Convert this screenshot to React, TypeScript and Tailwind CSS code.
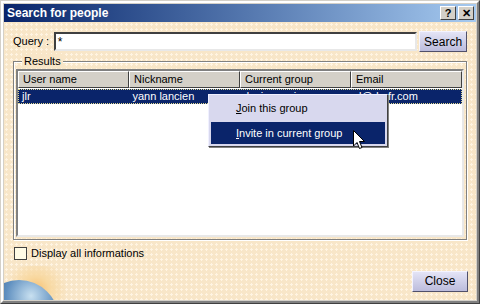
import React from 'react'

const font = "font-['Liberation_Sans','Arial',sans-serif]"

function TitleButton({ children }: { children: React.ReactNode }) {
  return (
    <div className="w-[16px] h-[14px] bg-[#d4d0c8] border border-t-white border-l-white border-r-[#404040] border-b-[#404040] flex items-center justify-center text-[11px] font-bold leading-none text-black">
      {children}
    </div>
  )
}

function LavButton({ label, w }: { label: string; w: string }) {
  return (
    <div
      className={`${w} h-[21px] flex items-center justify-center text-[12px] text-black bg-gradient-to-b from-[#e4e4f6] to-[#bcbcdc] border border-t-[#f4f4ff] border-l-[#f4f4ff] border-r-[#50506a] border-b-[#50506a]`}
    >
      {label}
    </div>
  )
}

const cols = ['User name', 'Nickname', 'Current group', 'Email']
const row = ['jlr', 'yann lancien', 'design review', 'yl@ds-fr.com']

export default function App() {
  return (
    <div className={`w-[480px] h-[304px] bg-[#d4d0c8] border border-t-[#d4d0c8] border-l-[#d4d0c8] border-r-[#404040] border-b-[#404040] ${font}`}>
      <div className="h-full w-full border-2 border-t-white border-l-white border-r-[#808080] border-b-[#808080] flex flex-col">
        {/* title bar */}
        <div className="h-[18px] mx-px mt-px bg-gradient-to-r from-[#0a246a] to-[#a6caf0] flex items-center pl-[3px] pr-[2px]">
          <span className="text-white font-bold text-[12px] leading-none flex-1">Search for people</span>
          <div className="flex items-center">
            <TitleButton>?</TitleButton>
            <div className="w-[2px]" />
            <TitleButton>✕</TitleButton>
          </div>
        </div>

        {/* body */}
        <div className="relative flex-1 mx-px mb-px overflow-hidden bg-[#f8e6c8] bg-[radial-gradient(circle,#fff4e2_1px,transparent_1.2px)] bg-[length:5px_5px] text-[11px]">
          {/* globe decoration */}
          <div className="absolute left-[-6px] top-[244px] w-[76px] h-[60px] rounded-full bg-[radial-gradient(circle_at_50%_40%,#f8c070_0%,#f8d8a0_25%,rgba(248,230,200,0)_60%)]" />
          <div className="absolute left-[-25px] top-[258px] w-[80px] h-[80px] rounded-full bg-[radial-gradient(circle_at_65%_20%,#c8e0f0_0%,#6090c0_30%,#2a4a70_70%)]" />

          <div className="relative flex flex-col pl-[9px] pr-[9px] pt-[9px] h-full">
            {/* query row */}
            <div className="flex items-center h-[21px]">
              <span className="text-black w-[41px] whitespace-nowrap">Query :</span>
              <div className="w-[365px] h-[19px] bg-white border-2 border-t-[#404040] border-l-[#404040] border-r-[#e8e8e8] border-b-[#e8e8e8] flex items-center pl-[2px] text-[12px] text-black">
                *
              </div>
              <div className="w-[2px]" />
              <LavButton label="Search" w="w-[48px]" />
            </div>

            {/* results group */}
            <div className="relative mt-[9px] h-[179px] border border-[#808080] shadow-[inset_1px_1px_0_#fff,1px_1px_0_#fff] px-[2px] pt-[7px] pb-[2px]">
              <span className="absolute left-[8px] top-[-8px] px-[2px] leading-[14px] text-black bg-[#f8e6c8]">Results</span>
              <div className="h-full bg-white border-2 border-t-[#808080] border-l-[#808080] border-r-[#e8e8e8] border-b-[#e8e8e8] flex flex-col">
                <div className="flex h-[17px]">
                  {cols.map((c) => (
                    <div
                      key={c}
                      className="w-[112px] bg-[#d4d0c8] border border-t-white border-l-white border-r-[#404040] border-b-[#404040] leading-[15px] text-black pl-[4px]"
                    >
                      {c}
                    </div>
                  ))}
                </div>
                <div className="flex h-[15px] mt-px bg-[#0a246a] border border-dotted border-[#e0d890]">
                  {row.map((c, i) => (
                    <div key={i} className="w-[112px] leading-[13px] text-white pl-[3px] whitespace-nowrap">
                      {c}
                    </div>
                  ))}
                </div>
              </div>
            </div>

            {/* checkbox */}
            <div className="flex items-center mt-[5px] ml-px">
              <div className="w-[13px] h-[13px] bg-[#fffbe6] border border-[#404040]" />
              <span className="ml-[4px] text-black">Display all informations</span>
            </div>

            <div className="flex justify-end mt-[9px] mr-[-1px]">
              <LavButton label="Close" w="w-[56px]" />
            </div>
          </div>

          {/* context menu */}
          <div className="absolute left-[204px] top-[72px] w-[180px] h-[53px] bg-[#d8d8ee] border border-t-[#f0f0ff] border-l-[#f0f0ff] border-r-[#404040] border-b-[#404040] shadow-[1px_1px_0_#808080] p-[2px] flex flex-col gap-[2px]">
            <div className="h-[23px] flex items-center pl-[25px] text-black bg-[#d8d8ee]">
              <span><span className="underline">J</span>oin this group</span>
            </div>
            <div className="h-[23px] flex items-center pl-[25px] text-white bg-[#0a246a]">
              <span><span className="underline">I</span>nvite in current group</span>
            </div>
          </div>

          {/* cursor */}
          <svg className="absolute left-[349px] top-[108px]" width="13" height="20" viewBox="0 0 13 20">
            <path d="M0.5 0.5 L0.5 16 L4 12.5 L6.5 18.5 L9 17.5 L6.5 11.5 L11.5 11.5 Z" fill="#fff" stroke="#000" strokeWidth="1" />
          </svg>
        </div>
      </div>
    </div>
  )
}
